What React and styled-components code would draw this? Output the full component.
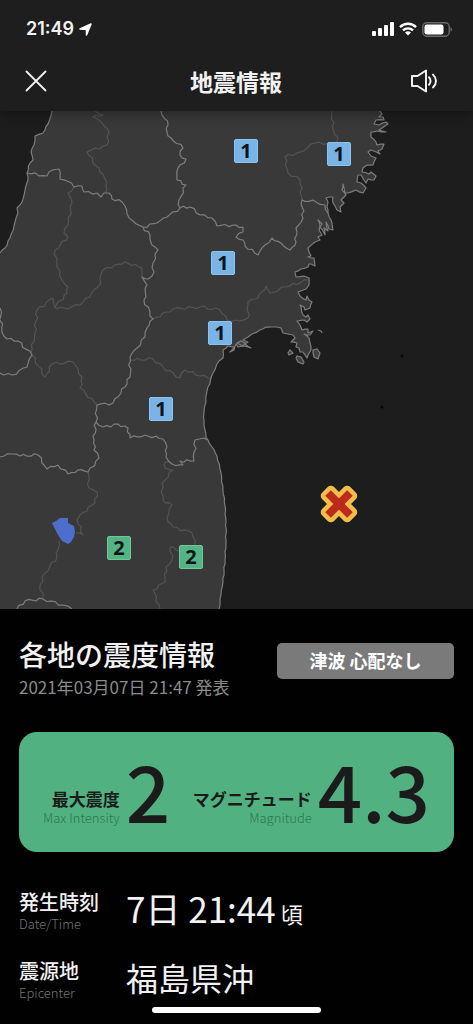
import React from "react";
import styled, { createGlobalStyle } from "styled-components";

const GlobalStyle = createGlobalStyle`
  * { box-sizing: border-box; }
  html { background: #000; }
  body {
    margin: 0;
    color: #f2f2f2;
    font-family: "Noto Sans CJK JP", sans-serif;
  }
  h1, h2, p, dl, dt, dd, ul { margin: 0; padding: 0; }
`;

const Screen = styled.main`
  min-height: 100vh;
  display: flex;
  flex-direction: column;
  background: #000;
`;

const Header = styled.header`
  position: relative;
  z-index: 1;
  background: #1e1e1e;
  box-shadow: 0 3px 12px rgba(0, 0, 0, 0.35);
`;

const StatusBar = styled.div`
  display: flex;
  align-items: center;
  justify-content: space-between;
  height: 56px;
  padding: 2px 20px 0 26px;
`;

const StatusGroup = styled.div`
  display: flex;
  align-items: center;
  gap: 5px;
`;

const Clock = styled.time`
  font: 600 18px/24px Inter, sans-serif;
`;

const NavBar = styled.div`
  display: grid;
  grid-template-columns: 48px 1fr 48px;
  align-items: center;
  height: 55px;
  padding: 0 25px 6px 12px;
`;

const NavTitle = styled.h1`
  text-align: center;
  font: 700 23px/32px "Noto Sans CJK JP", sans-serif;
  padding-left: 12px;
`;

const IconButton = styled.button`
  display: grid;
  place-items: center;
  width: 48px;
  height: 48px;
  padding: 0;
  border: 0;
  background: none;
  color: #f2f2f2;
  cursor: pointer;
`;

const MapArea = styled.section`
  position: relative;
  background: #1d1d1d;
`;

const MapDrawing = styled.svg`
  display: block;
  width: 100%;
  height: auto;
`;

const PIN_COLORS = { 1: "#78b4e6", 2: "#54b485" };
const PIN_EDGES = { 1: "#8cc4f0", 2: "#70c69a" };

const Pin = styled.span`
  position: absolute;
  left: ${(p) => (p.$x / 473) * 100}%;
  top: ${(p) => ((p.$y - 111) / 498) * 100}%;
  transform: translate(-50%, -50%);
  width: 24px;
  height: 24px;
  border: 1px solid ${(p) => PIN_EDGES[p.$level]};
  border-radius: 2px;
  background: ${(p) => PIN_COLORS[p.$level]};
  color: #101418;
  text-align: center;
  font: 700 20px/22px "Open Sans", sans-serif;
`;

const Panel = styled.section`
  flex: 1;
  display: flex;
  flex-direction: column;
  padding: 24px 19px 11px;
  background: #010101;
`;

const PanelHead = styled.div`
  display: flex;
  align-items: flex-start;
  justify-content: space-between;
`;

const PanelTitle = styled.h2`
  font: 500 28px/42px "Noto Sans CJK JP", sans-serif;
`;

const Published = styled.p`
  color: #8b8b8b;
  font-size: 17px;
  line-height: 24px;
`;

const Badge = styled.p`
  width: 177px;
  margin-top: 10px;
  padding-bottom: 2px;
  border-radius: 5px;
  background: #7a7a7a;
  color: #fff;
  text-align: center;
  font: 700 18px/34px "Noto Sans CJK JP", sans-serif;
`;

const Summary = styled.dl`
  display: flex;
  align-items: flex-end;
  justify-content: space-between;
  height: 120px;
  margin-top: 33px;
  padding: 0 24px 25px 24px;
  border-radius: 18px;
  background: #52b181;
  color: #1b1b1b;
`;

const Metric = styled.div`
  display: flex;
  align-items: flex-end;
  gap: 6px;
`;

const MetricLabel = styled.dt`
  text-align: right;
  font: 700 17px/20px "Noto Sans CJK JP", sans-serif;
`;

const English = styled.span`
  display: block;
  color: ${(p) => (p.$onGreen ? "#2a7852" : "#757575")};
  font: 300 13px/18px "Noto Sans CJK JP", sans-serif;
`;

const MetricValue = styled.dd`
  font: 500 78px/76px "Noto Sans CJK JP", sans-serif;
`;

const Details = styled.dl`
  display: grid;
  gap: 25px;
  margin-top: 37px;
`;

const DetailRow = styled.div`
  display: grid;
  grid-template-columns: 107px 1fr;
  align-items: start;
`;

const DetailLabel = styled.dt`
  font: 500 20px/26px "Noto Sans CJK JP", sans-serif;
`;

const DetailValue = styled.dd`
  font: 400 ${(p) => p.$size}px/38px "Noto Sans CJK JP", sans-serif;
`;

const Suffix = styled.small`
  margin-left: 5px;
  font-size: 22px;
`;

const HomeIndicator = styled.div`
  width: 169px;
  height: 6px;
  margin: auto auto 0;
  border-radius: 3px;
  background: #fff;
`;

/* Subdivides a polyline and nudges the new points so borders look surveyed. */
function rough(text, amount = 1.6) {
  const pts = text.trim().split(/\s+/).map((p) => p.split(",").map(Number));
  const out = [pts[0]];
  for (let i = 1; i < pts.length; i += 1) {
    const [ax, ay] = pts[i - 1];
    const [bx, by] = pts[i];
    const length = Math.hypot(bx - ax, by - ay);
    const steps = Math.max(1, Math.round(length / 4));
    for (let s = 1; s < steps; s += 1) {
      const t = s / steps;
      const n = Math.sin((ax + i * 13.7 + s * 7.9) * 12.9898) * amount;
      out.push([
        ax + (bx - ax) * t - ((by - ay) / length) * n,
        ay + (by - ay) * t + ((bx - ax) / length) * n,
      ]);
    }
    out.push([bx, by]);
  }
  return out.map((p) => p.map((v) => v.toFixed(1)).join(",")).join(" ");
}

const WEST_COAST =
  "0,253 5,248 10,238 14,226 18,213 17,208 22,202 25,190 28,180 27,173 30,163 33,160 31,152 34,145 35,136 43,133 48,124 52,111 53,100";

const EAST_COAST =
  "380,100 380,111 382,114 379,117 383,117 384,120 376,120 374,124 379,125 386,122 388,124 382,128 379,130 386,132 377,131 371,132 371,137 376,142 377,145 384,144 382,149 378,151 380,154 371,150 368,152 371,156 376,158 373,165 367,165 363,168 362,172 369,174 371,172 376,176 374,180 368,179 366,183 361,175 358,175 357,182 361,183 366,188 363,193 356,190 348,193 345,193 343,184 342,190 346,195 341,200 344,203 340,207 341,212 337,210 335,206 333,203 333,197 326,198 328,202 327,207 328,213 331,220 333,230 329,229 326,222 328,231 324,228 325,235 320,227 322,224 318,220 320,226 319,230 322,235 318,237 320,240 315,242 308,248 309,252 311,256 308,257 314,258 315,266 311,264 309,264 308,267 301,269 295,272 296,277 304,276 309,278 309,285 306,289 298,292 300,296 306,300 307,296 309,300 312,302 310,308 305,310 304,307 300,305 303,315 306,317 308,315 310,319 307,322 304,320 297,321 300,325 302,330 308,329 308,333 313,331 310,335 304,334 309,338 310,343 311,350 308,355 307,358 303,352 300,352 299,348 296,347 297,343 291,342 295,338 293,335 288,334 283,333 281,328 272,327 266,327 260,330 252,334 248,337 243,340 248,342 245,344 251,348 243,346 238,347 236,344 234,350 230,352 234,347 228,346 223,350 223,358 219,361 213,373 207,391 204,413 204,425 206,437 212,447 217,456 221,473 223,490 225,506 226,522 226,540 225,560 223,582 221,595 219,609 219,620";

const PREFECTURE_BORDERS = [
  "27,173 47,176 49,172 59,169 60,179 67,181 74,187 82,186 84,192 97,193 101,197 104,193 109,193 112,199 122,202 125,206 127,214 133,221 143,227",
  "143,227 157,223 167,217 180,208 190,207 200,215 212,218 217,226 233,225 243,227 243,232 236,237 243,240 245,246 258,255 265,245 272,238 281,243 290,250 296,242 296,228 303,218 302,200 316,202 325,205 328,213",
  "180,208 179,200 186,185 177,180 178,168 186,159 180,155 183,148 171,138 167,132 168,125 161,111",
  "143,227 150,235 152,245 158,250 153,263 154,272 148,279 142,277 147,285 144,300 153,319 147,328 145,337 137,348 130,357 130,377 121,393 113,403 97,405 96,422 94,440 94,450 99,458 88,472 78,470 68,474 58,465 47,469 38,455 20,456 12,454 0,457",
  "96,422 103,427 118,424 128,428 130,438 145,435 163,439 167,447 166,457 172,464 183,465 180,461 194,461 195,440 204,438 207,440",
  "0,308 2,332 7,339 18,341 32,355 27,367 12,375 0,373",
  "17,609 25,601 43,599 63,605 72,609",
];

const REGION_BORDERS = [
  "95,111 103,115 93,117 102,123 109,133 107,145 87,152 100,172 107,182 105,193",
  "74,187 68,193 72,203 68,225 64,233 68,237 55,250 57,267 62,280 68,287 67,293 55,307 53,298 37,310 35,333 31,353",
  "54,307 68,309 83,302 98,287 103,270 115,265 125,262 142,268 142,277",
  "32,355 45,377 52,364 73,362 82,377 80,388 97,405",
  "153,319 173,309 200,307 220,310 227,320 240,321 248,318 248,302 258,298 266,286 270,293 286,287 308,280",
  "130,360 153,359 163,367 180,378 185,370 200,376 212,378",
  "332,111 333,130 338,138 337,145",
  "328,143 315,143 300,152 285,157 288,173 300,180 302,200",
  "88,472 89,488 97,492 95,503 80,515 77,520 83,535 76,533",
  "59,541 57,557 45,573 40,585 43,598",
  "172,464 165,462 165,468 173,470 162,483 163,500 172,505 167,518 173,527 192,533 195,545",
  "180,550 170,547 172,560 166,567 165,582 153,590 160,609",
];

const PINS = [
  { x: 246, y: 151, level: 1 },
  { x: 339, y: 154, level: 1 },
  { x: 223, y: 263, level: 1 },
  { x: 220, y: 333, level: 1 },
  { x: 161, y: 409, level: 1 },
  { x: 119, y: 548, level: 2 },
  { x: 191, y: 557, level: 2 },
];

const west = rough(WEST_COAST, 0.6);
const east = rough(EAST_COAST, 0.5);

function Epicenter() {
  return (
    <g transform="translate(339 504)">
      {["#f2bd4a", "none"].map((edge) => (
        <g key={edge} fill="#bd2a1c" stroke={edge} strokeWidth="9" strokeLinejoin="round">
          <rect x="-15.5" y="-4" width="31" height="8" transform="rotate(45)" />
          <rect x="-15.5" y="-4" width="31" height="8" transform="rotate(-45)" />
        </g>
      ))}
    </g>
  );
}

function TohokuMap() {
  return (
    <MapDrawing viewBox="0 111 473 498" role="img" aria-label="東北地方の地図">
      <polygon points={`-5,253 ${west} ${east} -5,620`} fill="#393939" />
      <g fill="none" strokeLinejoin="round" stroke="#545454" strokeWidth="1.2">
        {REGION_BORDERS.map((b) => (
          <polyline key={b} points={rough(b, 1.4)} />
        ))}
      </g>
      <g fill="none" strokeLinejoin="round" stroke="#7d7d7d" strokeWidth="1.2">
        {PREFECTURE_BORDERS.map((b) => (
          <polyline key={b} points={rough(b, 1.4)} />
        ))}
        <polyline points={west} />
        <polyline points={east} />
      </g>
      <g fill="#414141" stroke="#7d7d7d" strokeWidth="1.2">
        <path d="M297 356l4 1 3 5-1 2-5-2-2-4z" />
        <path d="M313 350l4-1 3 4-2 6-4-2-1-4z" />
        <path d="M290 350l3 3-4 2-1-2z" />
        <path d="M318 330l3 1 1 2" fill="none" />
        <path d="M237 343l4-2 4 2-2 3z" />
      </g>
      <path
        d="M52 523L56 521L60 518H68L68 523L74 526L75 532L74 537L71 542L68 544L62 541L58 535L55 529Z"
        fill="#4d6fcb"
      />
      <g fill="#070707">
        <circle cx="402" cy="356" r="1.5" />
        <circle cx="382" cy="407" r="1.5" />
      </g>
      <Epicenter />
    </MapDrawing>
  );
}

const LocationIcon = () => (
  <svg width="13" height="13" viewBox="0 0 13 13" aria-hidden="true">
    <path
      d="M12 1L7.500 12V6.500L1 6z"
      fill="#fff"
      stroke="#fff"
      strokeWidth="1.500"
      strokeLinejoin="round"
    />
  </svg>
);

const SignalIcon = () => (
  <svg width="22" height="14" viewBox="0 0 22 14" fill="#fff" aria-hidden="true">
    <rect x="0" y="9" width="4" height="5" rx="1" />
    <rect x="6" y="6" width="4" height="8" rx="1" />
    <rect x="12" y="3" width="4" height="11" rx="1" />
    <rect x="18" y="0" width="4" height="14" rx="1" />
  </svg>
);

const WifiIcon = () => (
  <svg width="18" height="14" viewBox="0 0 18 14" aria-hidden="true">
    <g fill="none" stroke="#fff" strokeWidth="2.4">
      <path d="M1 5.1a11.4 11.4 0 0 1 16 0" />
      <path d="M4 8.4a7.1 7.1 0 0 1 10 0" />
    </g>
    <path d="M9 13.6l-3-3a4.3 4.3 0 0 1 6 0z" fill="#fff" />
  </svg>
);

const BatteryIcon = () => (
  <svg width="31" height="15" viewBox="0 0 31 15" aria-hidden="true">
    <rect x=".8" y=".8" width="26.4" height="13.4" rx="4" fill="none" stroke="#6a6a6a" strokeWidth="1.4" />
    <rect x="2.5" y="2.5" width="19" height="10" rx="2.2" fill="#fff" />
    <path d="M28.5 5.2c2 .7 2 3.900 0 4.600z" fill="#6a6a6a" />
  </svg>
);

const CloseIcon = () => (
  <svg width="22" height="22" viewBox="0 0 22 22" aria-hidden="true">
    <path d="M1 1l20 20M21 1L1 21" fill="none" stroke="currentColor" strokeWidth="1.8" />
  </svg>
);

const SpeakerIcon = () => (
  <svg width="28" height="24" viewBox="0 0 28 24" aria-hidden="true">
    <g fill="none" stroke="currentColor" strokeWidth="2" strokeLinejoin="round">
      <path d="M2 7h5.500L16 1.500v21L7.500 17H2z" />
      <path d="M19 8.300c2 2 2 5.400 0 7.400" strokeLinecap="round" />
      <path d="M23 5.600c4 3.800 4 9 0 12.800" strokeLinecap="round" />
    </g>
  </svg>
);

export default function App() {
  return (
    <>
      <GlobalStyle />
      <Screen>
        <Header>
          <StatusBar>
            <StatusGroup>
              <Clock>21:49</Clock>
              <LocationIcon />
            </StatusGroup>
            <StatusGroup>
              <SignalIcon />
              <WifiIcon />
              <BatteryIcon />
            </StatusGroup>
          </StatusBar>
          <NavBar>
            <IconButton type="button" aria-label="閉じる">
              <CloseIcon />
            </IconButton>
            <NavTitle>地震情報</NavTitle>
            <IconButton type="button" aria-label="音声">
              <SpeakerIcon />
            </IconButton>
          </NavBar>
        </Header>

        <MapArea>
          <TohokuMap />
          {PINS.map((pin) => (
            <Pin key={`${pin.x}-${pin.y}`} $x={pin.x} $y={pin.y} $level={pin.level}>
              {pin.level}
            </Pin>
          ))}
        </MapArea>

        <Panel>
          <PanelHead>
            <div>
              <PanelTitle>各地の震度情報</PanelTitle>
              <Published>2021年03月07日 21:47 発表</Published>
            </div>
            <Badge>津波 心配なし</Badge>
          </PanelHead>

          <Summary>
            <Metric>
              <MetricLabel>
                最大震度<English $onGreen>Max Intensity</English>
              </MetricLabel>
              <MetricValue>2</MetricValue>
            </Metric>
            <Metric>
              <MetricLabel>
                マグニチュード<English $onGreen>Magnitude</English>
              </MetricLabel>
              <MetricValue>4.3</MetricValue>
            </Metric>
          </Summary>

          <Details>
            <DetailRow>
              <DetailLabel>
                発生時刻<English>Date/Time</English>
              </DetailLabel>
              <DetailValue $size={35}>
                7日 21:44<Suffix>頃</Suffix>
              </DetailValue>
            </DetailRow>
            <DetailRow>
              <DetailLabel>
                震源地<English>Epicenter</English>
              </DetailLabel>
              <DetailValue $size={32}>福島県沖</DetailValue>
            </DetailRow>
          </Details>
          <HomeIndicator />
        </Panel>
      </Screen>
    </>
  );
}
